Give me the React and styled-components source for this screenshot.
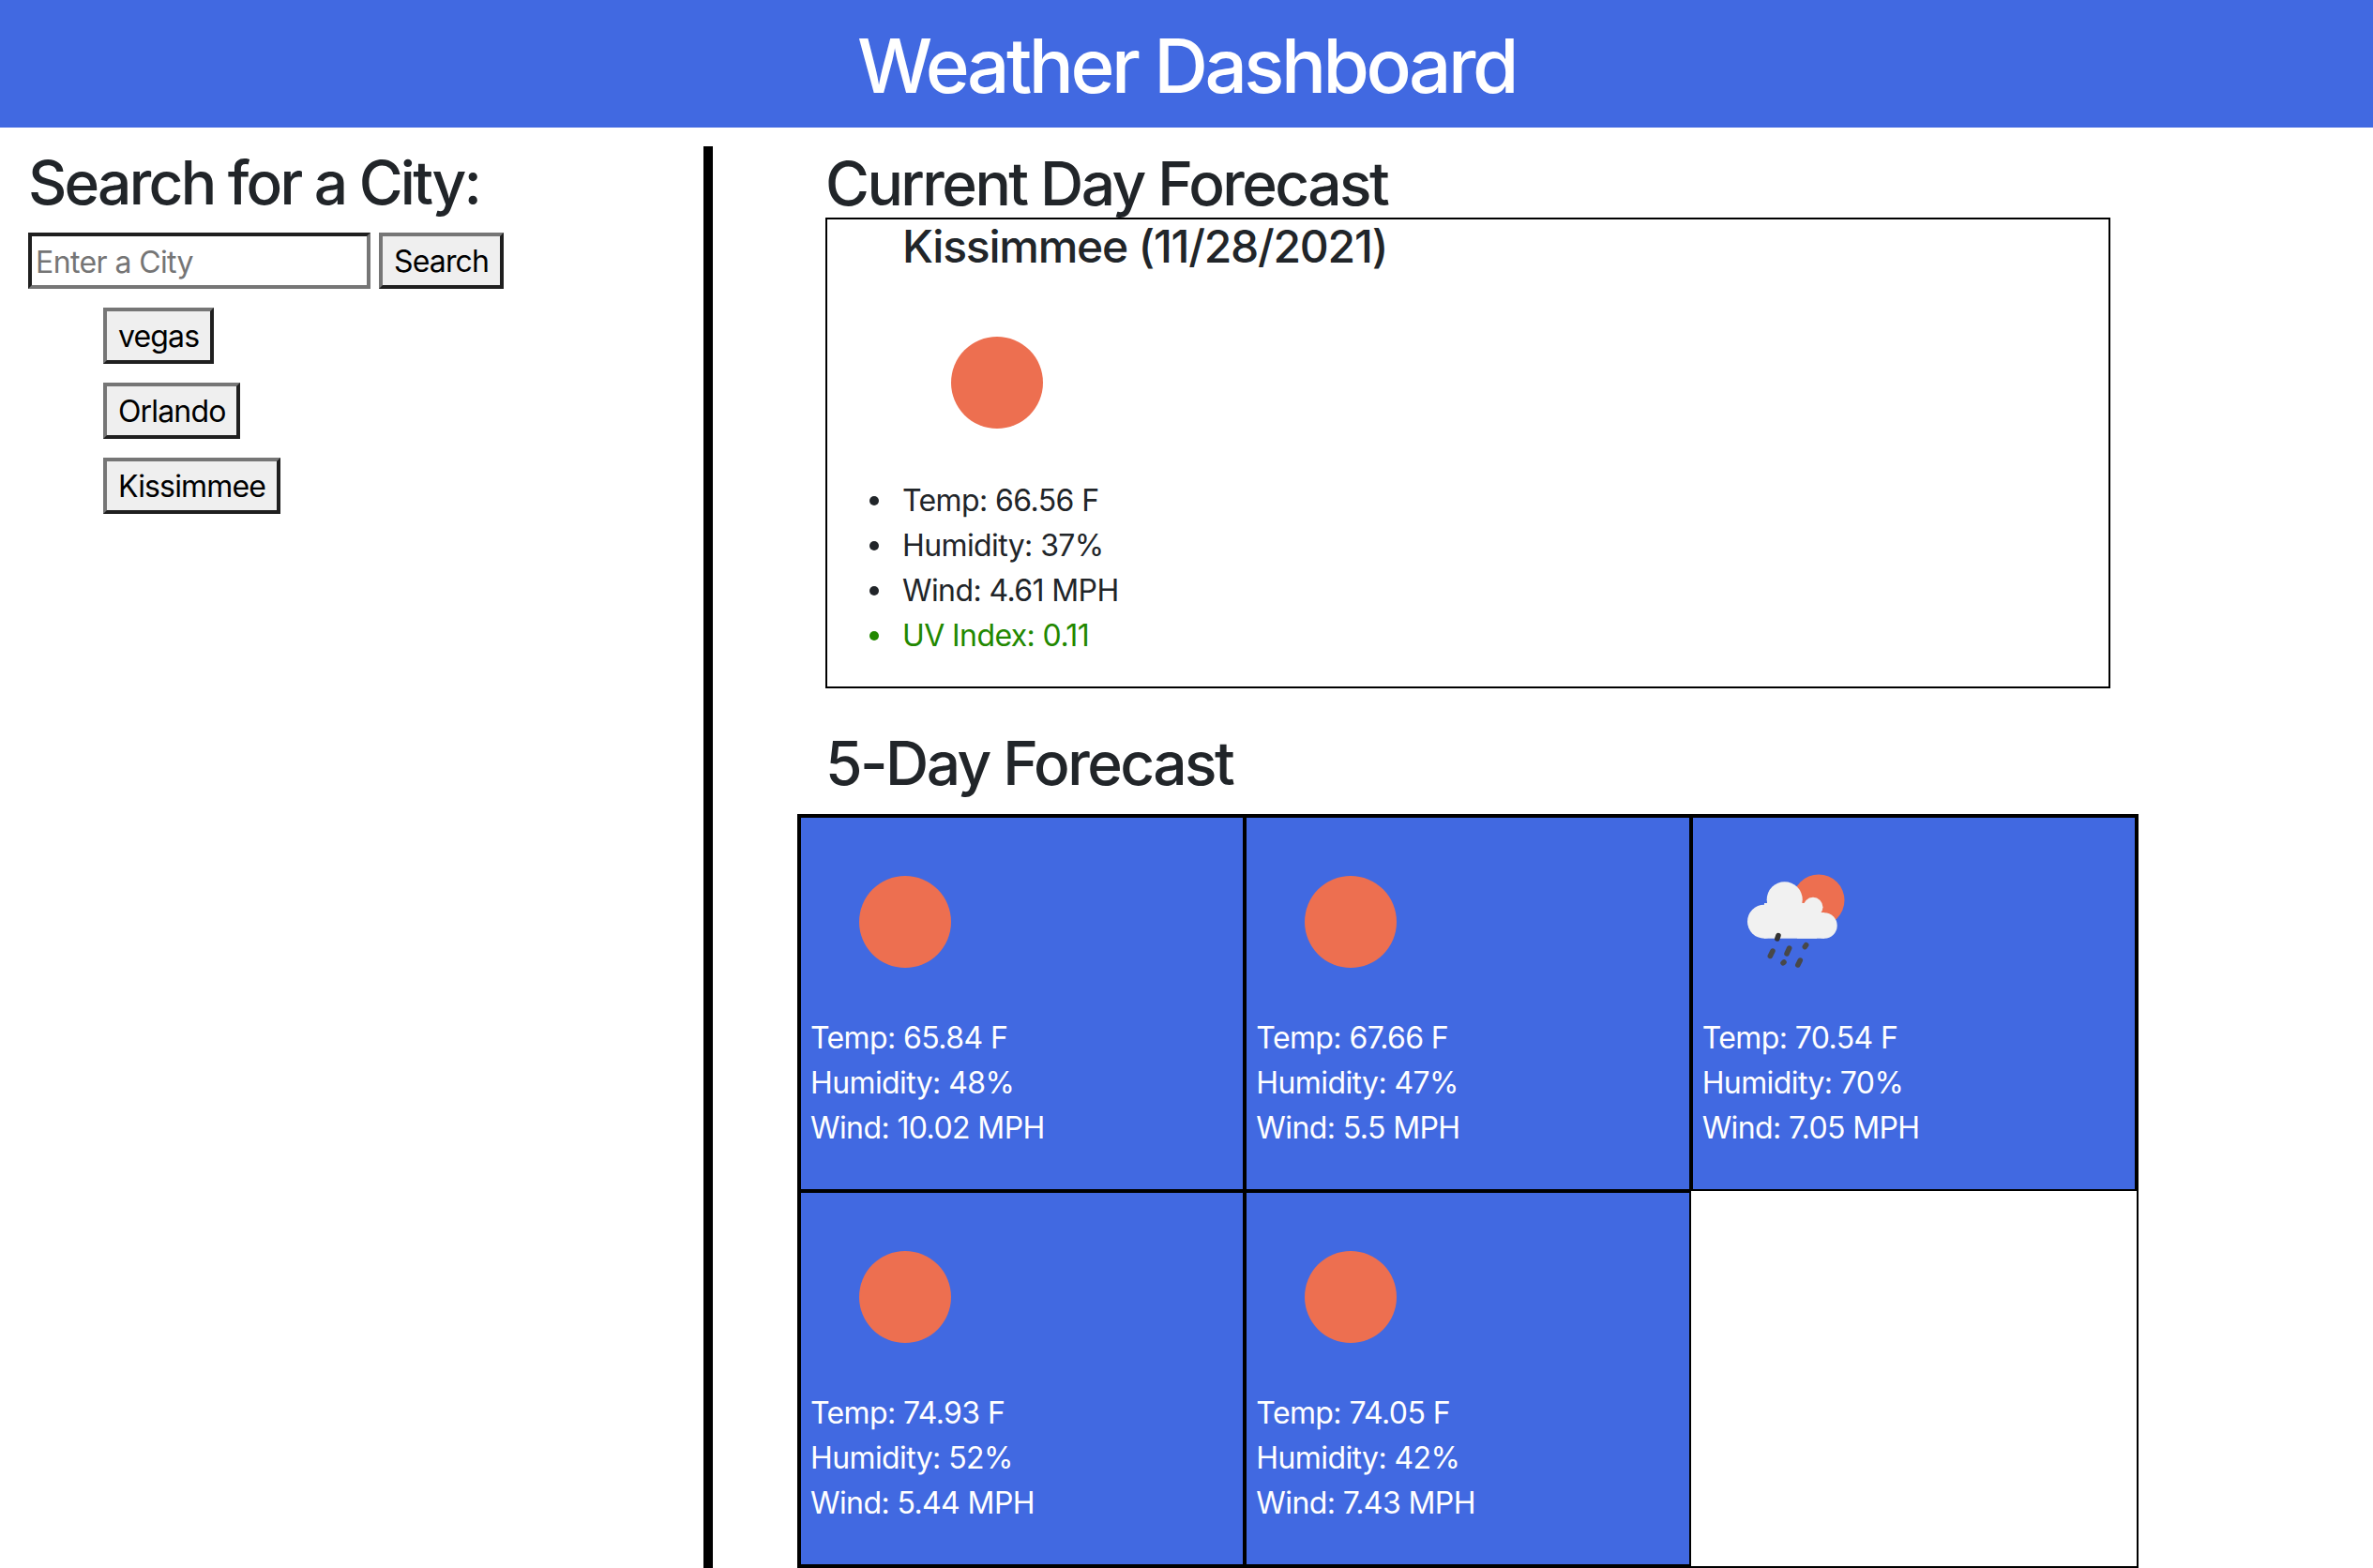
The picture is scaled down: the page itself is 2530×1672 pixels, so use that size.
import React from 'react'
import styled, { createGlobalStyle } from 'styled-components'

const GlobalStyle = createGlobalStyle`
  html, body { margin: 0; padding: 0; background: #fff; }
  body {
    font-family: Inter, "Liberation Sans", sans-serif;
    font-size: 32px;
    line-height: 48px;
    letter-spacing: -0.6px;
    color: #212529;
    height: 1672px;
    overflow: hidden;
  }
  * { box-sizing: border-box; }
`

const Header = styled.header`
  height: 136px;
  padding-top: 3px;
  background: #4169e1;
  color: #fff;
  display: flex;
  align-items: center;
  justify-content: center;
`

const Title = styled.h1`
  margin: 0;
  font-size: 80px;
  line-height: 1;
  font-weight: 500;
  letter-spacing: -3.5px;
`

const Page = styled.div`
  display: flex;
  align-items: flex-start;
`

const Sidebar = styled.aside`
  width: 760px;
  height: 1516px;
  margin-top: 20px;
  padding-left: 30px;
  border-right: 10px solid #000;
  flex-shrink: 0;
`

const SideHeading = styled.h2`
  margin: 0 0 15px;
  font-size: 64px;
  line-height: 77px;
  font-weight: 500;
  letter-spacing: -2.75px;
`

const SearchRow = styled.form`
  display: flex;
  gap: 9px;
  margin: 0 0 20px;
`

const CityInput = styled.input`
  width: 365px;
  height: 60px;
  padding: 3px 4px 1px;
  border: 4px solid;
  border-color: #1f1f1f #767676 #767676 #1f1f1f;
  font: inherit;
  letter-spacing: -0.6px;
  background: #fff;
  outline: none;
  &::placeholder { color: #757575; opacity: 1; }
`

const Button = styled.button`
  height: 60px;
  padding: 2px 12px 0;
  border: 4px solid;
  border-color: #767676 #1f1f1f #1f1f1f #767676;
  background: #efefef;
  color: #000;
  font: inherit;
  letter-spacing: -0.85px;
  line-height: 1;
`

const CityList = styled.div`
  display: flex;
  flex-direction: column;
  align-items: flex-start;
  gap: 20px;
  padding-left: 80px;
`

const Main = styled.main`
  width: 1430px;
  margin-left: 90px;
`

const Heading = styled.h2`
  margin: 21px 0 0 30px;
  font-size: 64px;
  line-height: 77px;
  font-weight: 500;
  letter-spacing: -2.55px;
`

const CurrentCard = styled.section`
  width: 1370px;
  height: 502px;
  margin: -2px 0 0 30px;
  border: 2px solid #000;
`

const CityName = styled.h3`
  margin: 0 0 0 80px;
  font-size: 48px;
  line-height: 58px;
  font-weight: 500;
  letter-spacing: -1.25px;
`

const CurrentIcon = styled.div`
  width: 200px;
  height: 200px;
  margin: 16px 0 0 81px;
  display: flex;
`

const Details = styled.ul`
  margin: 2px 0 0;
  padding: 0 0 0 80px;
  list-style: none;
`

const Detail = styled.li`
  display: flex;
  align-items: center;
  color: ${props => props.$color || 'inherit'};
  &::before {
    content: '';
    width: 10px;
    height: 10px;
    margin: 0 25px 0 -35px;
    border-radius: 50%;
    background: currentColor;
  }
`

const ForecastHeading = styled(Heading)`
  margin-top: 41px;
`

const ForecastGrid = styled.div`
  display: grid;
  grid-template-columns: repeat(3, 1fr);
  grid-auto-rows: 400px;
  height: 804px;
  margin-top: 16px;
  border: 2px solid #000;
`

const DayCard = styled.div`
  border: 2px solid #000;
  background: #4169e1;
  color: #fff;
  padding: 0 10px;
`

const DayIcon = styled.div`
  width: 200px;
  height: 200px;
  margin: 11px 0 0 1px;
  display: flex;
`

const DayLine = styled.div``

function Sun() {
  return (
    <svg width="200" height="200" viewBox="0 0 200 200">
      <circle cx="100" cy="100" r="49" fill="#ed6f50" />
    </svg>
  )
}

function RainCloud() {
  return (
    <svg width="200" height="200" viewBox="0 0 200 200">
      <circle cx="123" cy="77" r="27.5" fill="#ed6f50" />
      <g fill="#f1f1f1">
        <circle cx="65" cy="99.7" r="18" />
        <circle cx="86.7" cy="76.3" r="19" />
        <circle cx="117" cy="84.3" r="10.5" />
        <circle cx="129" cy="104" r="13.7" />
        <rect x="65" y="80" width="56" height="37.7" />
        <rect x="100" y="90" width="29" height="27.7" />
      </g>
      <g stroke="#484848" strokeWidth="5.5" strokeLinecap="round">
        <path d="M80 114.5 L78.8 118" stroke="#333" />
        <path d="M74 131 L71.3 136.5" />
        <path d="M91.7 128 L89 134" />
        <path d="M109.7 124.7 L108.3 126.7" />
        <path d="M86 143 L85 143.8" />
        <path d="M103.3 141 L100.8 146" />
      </g>
    </svg>
  )
}

const days = [
  { temp: '65.84', humidity: '48', wind: '10.02', icon: 'sun' },
  { temp: '67.66', humidity: '47', wind: '5.5', icon: 'sun' },
  { temp: '70.54', humidity: '70', wind: '7.05', icon: 'rain' },
  { temp: '74.93', humidity: '52', wind: '5.44', icon: 'sun' },
  { temp: '74.05', humidity: '42', wind: '7.43', icon: 'sun' },
]

export default function App() {
  return (
    <>
      <GlobalStyle />
      <Header>
        <Title>Weather Dashboard</Title>
      </Header>
      <Page>
        <Sidebar>
          <SideHeading>Search for a City:</SideHeading>
          <SearchRow onSubmit={e => e.preventDefault()}>
            <CityInput placeholder="Enter a City" />
            <Button>Search</Button>
          </SearchRow>
          <CityList>
            <Button>vegas</Button>
            <Button>Orlando</Button>
            <Button>Kissimmee</Button>
          </CityList>
        </Sidebar>
        <Main>
          <Heading>Current Day Forecast</Heading>
          <CurrentCard>
            <CityName>Kissimmee (11/28/2021)</CityName>
            <CurrentIcon><Sun /></CurrentIcon>
            <Details>
              <Detail>Temp: 66.56 F</Detail>
              <Detail>Humidity: 37%</Detail>
              <Detail>Wind: 4.61 MPH</Detail>
              <Detail $color="#228800">UV Index: 0.11</Detail>
            </Details>
          </CurrentCard>
          <ForecastHeading>5-Day Forecast</ForecastHeading>
          <ForecastGrid>
            {days.map(day => (
              <DayCard key={day.temp}>
                <DayIcon>{day.icon === 'rain' ? <RainCloud /> : <Sun />}</DayIcon>
                <DayLine>Temp: {day.temp} F</DayLine>
                <DayLine>Humidity: {day.humidity}%</DayLine>
                <DayLine>Wind: {day.wind} MPH</DayLine>
              </DayCard>
            ))}
          </ForecastGrid>
        </Main>
      </Page>
    </>
  )
}
